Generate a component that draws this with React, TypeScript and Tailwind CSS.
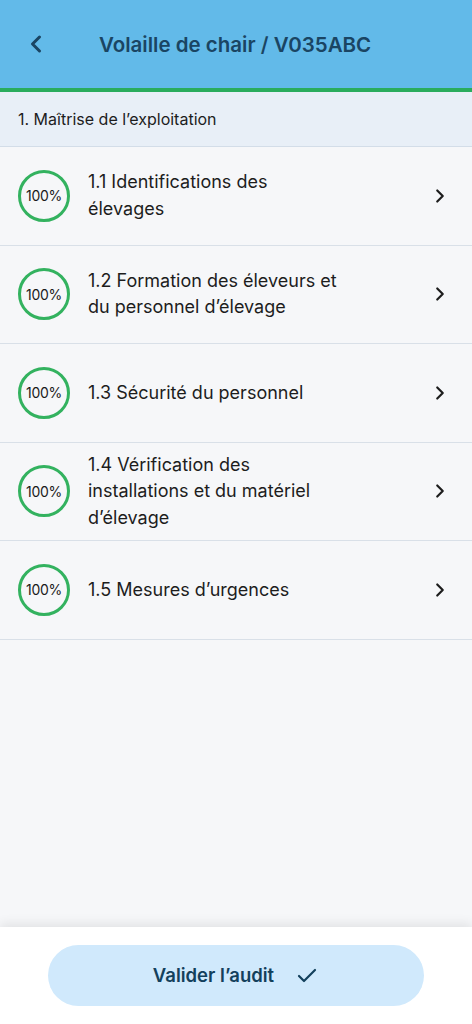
import { ChevronLeft, ChevronRight, Check } from 'lucide-react';

const items = [
  ['1.1 Identifications des', 'élevages'],
  ['1.2 Formation des éleveurs et', 'du personnel d’élevage'],
  ['1.3 Sécurité du personnel'],
  ['1.4 Vérification des', 'installations et du matériel', 'd’élevage'],
  ['1.5 Mesures d’urgences'],
];

function Row({ lines }: { lines: string[] }) {
  return (
    <div className="flex items-center h-[98.5px] border-b border-[#d9e0e8] pl-[18px] pr-[21px]">
      <div className="w-[52px] h-[52px] shrink-0 rounded-full border-[3px] border-[#33b25f] flex items-center justify-center text-[14px] text-[#1b1b1b] tracking-[-0.3px]">
        100%
      </div>
      <div className="flex-1 pl-[18px] text-[18px] leading-[26.5px] text-[#1d1d1d]">
        {lines.map((l, i) => (
          <div key={i}>{l}</div>
        ))}
      </div>
      <ChevronRight size={22} strokeWidth={2.4} className="text-[#1d1d1d]" />
    </div>
  );
}

export default function App() {
  return (
    <div className="w-[472px] h-[1024px] flex flex-col bg-[#f6f7f9] font-['Inter',sans-serif]">
      <div className="h-[88px] bg-[#62bae9] flex items-center pl-[22px] shrink-0">
        <ChevronLeft size={28} strokeWidth={2.6} className="text-[#1a4563]" />
        <div className="ml-[49px] text-[20.5px] font-semibold text-[#1a4563] pt-[2px]">Volaille de chair / V035ABC</div>
      </div>
      <div className="h-[4px] bg-[#2aac5d] shrink-0" />
      <div className="h-[55px] bg-[#e8eff7] border-b border-[#d3dde8] flex items-center pl-[18px] text-[16px] text-[#1d1d1d] shrink-0">
        1. Maîtrise de l’exploitation
      </div>
      <div className="flex-1">
        {items.map((lines, i) => (
          <Row key={i} lines={lines} />
        ))}
      </div>
      <div className="h-[97px] bg-white shadow-[0_-4px_10px_rgba(0,0,0,0.08)] flex items-center justify-center shrink-0">
        <button className="w-[376px] h-[61px] rounded-full bg-[#d0e9fc] flex items-center justify-center gap-[21px] text-[18.5px] font-semibold text-[#13405c]">
          Valider l’audit
          <Check size={24} strokeWidth={2.2} />
        </button>
      </div>
    </div>
  );
}
